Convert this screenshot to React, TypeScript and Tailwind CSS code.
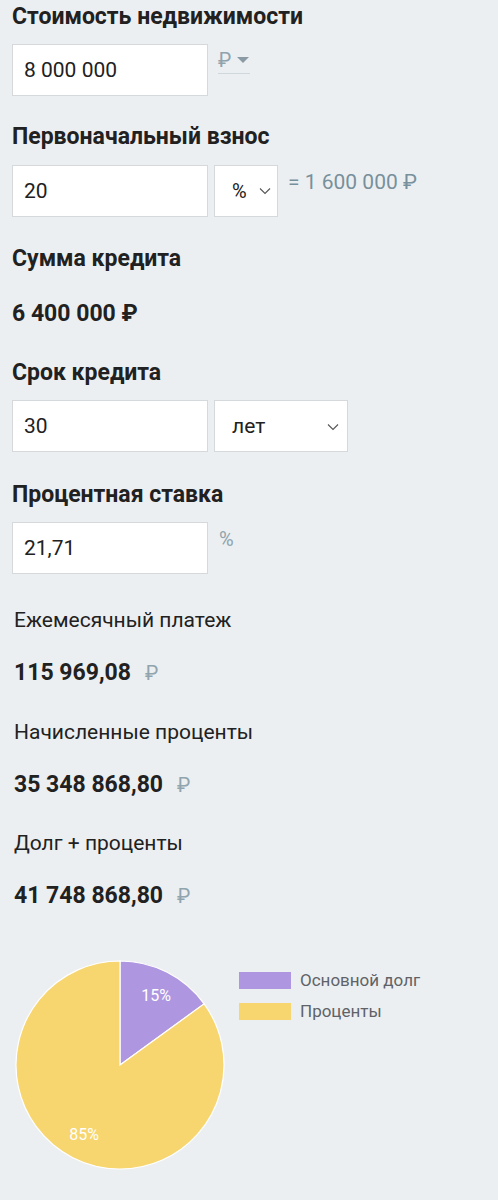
import React from "react";

const font = { fontFamily: "Roboto, 'Noto Sans', sans-serif" };

function Chevron() {
  return (
    <svg width="12" height="8" viewBox="0 0 12 8" className="text-[#555]">
      <path d="M1 1.5 L6 6.5 L11 1.5" fill="none" stroke="currentColor" strokeWidth="1.1" />
    </svg>
  );
}

function Heading({ children, className = "" }: { children: React.ReactNode; className?: string }) {
  return (
    <h2 className={`h-[34px] leading-[34px] text-[23px] font-bold text-[#212121] ${className}`}>
      {children}
    </h2>
  );
}

function Field({ value }: { value: string }) {
  return (
    <div className="w-[196px] h-[52px] bg-white border border-[#d6d9db] flex items-center px-[11px] pt-[2px] text-[21px] text-[#212121]">
      {value}
    </div>
  );
}

function ResultRow({ label, value, className = "" }: { label: string; value: string; className?: string }) {
  return (
    <div className={className}>
      <div className="h-[34px] leading-[34px] text-[21px] text-[#212121] pl-[2px]">{label}</div>
      <div className="mt-[19px] h-[34px] leading-[34px] pl-[2px] flex items-center">
        <span className="text-[23px] font-bold text-[#212121]">{value}</span>
        <span className="ml-[14px] text-[20px] text-[#90a4ae]">₽</span>
      </div>
    </div>
  );
}

function Pie() {
  const cx = 108;
  const cy = 106;
  const r = 104;
  const a = (54 * Math.PI) / 180;
  const x = cx + r * Math.sin(a);
  const y = cy - r * Math.cos(a);
  return (
    <svg width="228" height="214" viewBox="0 0 228 214">
      <path d={`M${cx} ${cy} L${cx} ${cy - r} A${r} ${r} 0 0 1 ${x} ${y} Z`} fill="#ae97e0" stroke="#fff" strokeWidth="1.2" />
      <path d={`M${cx} ${cy} L${x} ${y} A${r} ${r} 0 1 1 ${cx} ${cy - r} Z`} fill="#f7d56f" stroke="#fff" strokeWidth="1.2" />
      <text x="144" y="42" fill="#fff" fontSize="16" textAnchor="middle" fontFamily="Roboto, sans-serif">15%</text>
      <text x="72" y="181" fill="#fff" fontSize="16" textAnchor="middle" fontFamily="Roboto, sans-serif">85%</text>
    </svg>
  );
}

export default function App() {
  return (
    <div style={font} className="w-[498px] min-h-[1200px] bg-[#eceff1] pl-[12px] pt-0">
      {/* Стоимость */}
      <Heading>Стоимость недвижимости</Heading>
      <div className="mt-[10px] flex items-start">
        <Field value="8 000 000" />
        <div className="ml-[10px] mt-[3px] w-[32px] border-b border-[#cfd8dc] h-[27px] flex items-center text-[#8fa3ad]">
          <span className="text-[20px] leading-none">₽</span>
          <svg width="12" height="7" viewBox="0 0 12 7" className="ml-[6px]">
            <path d="M0 0 L12 0 L6 6 Z" fill="#8a9ba6" />
          </svg>
        </div>
      </div>

      {/* Первоначальный взнос */}
      <Heading className="mt-[24px]">Первоначальный взнос</Heading>
      <div className="mt-[11px] flex items-start">
        <Field value="20" />
        <div className="ml-[6px] w-[64px] h-[52px] bg-white border border-[#d6d9db] flex items-center pl-[17px] pr-[6px] justify-between text-[20px] text-[#212121]">
          <span>%</span>
          <Chevron />
        </div>
        <div className="ml-[10px] mt-[2px] text-[21px] text-[#78909c]">= 1 600 000 ₽</div>
      </div>

      {/* Сумма кредита */}
      <Heading className="mt-[25px]">Сумма кредита</Heading>
      <div className="mt-[21px] h-[34px] leading-[34px] text-[23px] font-bold text-[#212121]">6 400 000 ₽</div>

      {/* Срок кредита */}
      <Heading className="mt-[25px]">Срок кредита</Heading>
      <div className="mt-[10px] flex items-start">
        <Field value="30" />
        <div className="ml-[6px] w-[134px] h-[52px] bg-white border border-[#d6d9db] flex items-center pl-[17px] pr-[8px] pt-[2px] justify-between text-[21px] text-[#212121]">
          <span>лет</span>
          <Chevron />
        </div>
      </div>

      {/* Процентная ставка */}
      <Heading className="mt-[26px]">Процентная ставка</Heading>
      <div className="mt-[10px] flex items-start">
        <Field value="21,71" />
        <div className="ml-[11px] mt-[2px] text-[20px] text-[#8fa3ad]">%</div>
      </div>

      {/* Результаты */}
      <ResultRow className="mt-[29px]" label="Ежемесячный платеж" value="115 969,08" />
      <ResultRow className="mt-[25px]" label="Начисленные проценты" value="35 348 868,80" />
      <ResultRow className="mt-[24px]" label="Долг + проценты" value="41 748 868,80" />

      {/* Диаграмма */}
      <div className="mt-[46px] flex items-start">
        <Pie />
        <div className="mt-[13px] ml-[-1px] flex flex-col gap-[14px]">
          <div className="flex items-center">
            <div className="w-[52px] h-[17px] bg-[#ae97e0]" />
            <span className="ml-[9px] text-[17px] leading-[17px] text-[#5f6368]">Основной долг</span>
          </div>
          <div className="flex items-center">
            <div className="w-[52px] h-[17px] bg-[#f7d56f]" />
            <span className="ml-[9px] text-[17px] leading-[17px] text-[#5f6368]">Проценты</span>
          </div>
        </div>
      </div>
    </div>
  );
}
